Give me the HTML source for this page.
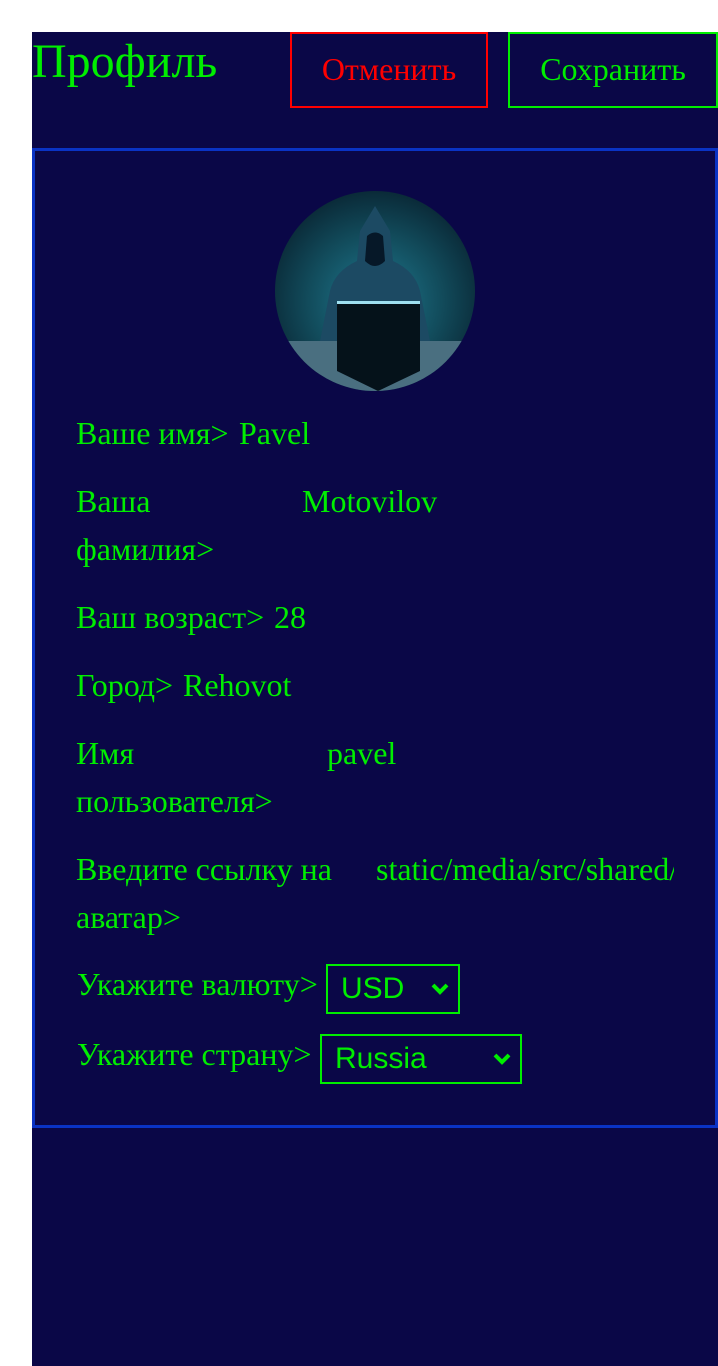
<!DOCTYPE html>
<html><head><meta charset="utf-8"><style>
html,body{margin:0;padding:0;width:718px;height:1366px;background:#fff;overflow:hidden}
.bg{position:absolute;left:32px;top:32px;width:686px;height:1334px;background:#0a0747}
*{font-family:"Liberation Serif",serif;}
.t{position:absolute;color:#00ee00;font-size:32px;line-height:48px;white-space:nowrap}
h1{position:absolute;left:32px;top:34px;margin:0;font-weight:normal;font-size:48px;line-height:56px;color:#00ee00}
.btn{position:absolute;top:32px;box-sizing:border-box;border:2px solid;font-size:32px;text-align:center}
.panel{position:absolute;left:32px;top:148px;width:686px;height:980px;box-sizing:border-box;border:3px solid #0a33c4}
.sel{position:absolute;box-sizing:border-box;border:2px solid #00ee00;height:50px;color:#00ee00;font-family:"Liberation Sans",sans-serif;font-size:30px;line-height:46px;padding-left:13px}
.sel svg{position:absolute;right:8px;top:16px}
</style></head><body>
<div class="bg"></div>
<h1>Профиль</h1>
<div class="btn" style="left:290px;width:198px;border-color:#f00;color:#f00;height:76px;line-height:70px">Отменить</div>
<div class="btn" style="left:508px;width:210px;border-color:#00ee00;color:#00ee00;height:76px;line-height:70px">Сохранить</div>
<div class="panel"></div>
<svg style="position:absolute;left:275px;top:191px" width="200" height="200" viewBox="0 0 200 200">
<defs><radialGradient id="g" cx="50%" cy="55%" r="55%"><stop offset="0" stop-color="#1f7b92"/><stop offset="0.6" stop-color="#124c5c"/><stop offset="1" stop-color="#0a2a38"/></radialGradient>
<clipPath id="c"><circle cx="100" cy="100" r="100"/></clipPath></defs>
<g clip-path="url(#c)">
<rect width="200" height="200" fill="url(#g)"/>
<path d="M100 15 L85 40 L82 70 Q60 80 55 100 L45 150 L155 150 L145 100 Q140 80 118 70 L115 40 Z" fill="#1c4a63"/>
<path d="M92 45 Q100 38 108 45 L110 70 Q100 80 90 70 Z" fill="#061828"/>
<rect x="0" y="150" width="200" height="50" fill="#4a6f80"/>
<path d="M62 112 L145 112 L145 180 L103 200 L62 180 Z" fill="#05121a"/>
<rect x="62" y="110" width="83" height="3" fill="#9fe0f0"/>
</g></svg>
<div class="t" style="left:76px;top:409px">Ваше имя&gt;</div><div class="t" style="left:239px;top:409px">Pavel</div>
<div class="t" style="left:76px;top:477px">Ваша<br>фамилия&gt;</div><div class="t" style="left:302px;top:477px">Motovilov</div>
<div class="t" style="left:76px;top:593px">Ваш возраст&gt;</div><div class="t" style="left:274px;top:593px">28</div>
<div class="t" style="left:76px;top:661px">Город&gt;</div><div class="t" style="left:183px;top:661px">Rehovot</div>
<div class="t" style="left:76px;top:729px">Имя<br>пользователя&gt;</div><div class="t" style="left:327px;top:729px">pavel</div>
<div class="t" style="left:76px;top:845px">Введите ссылку на<br>аватар&gt;</div><div class="t" style="left:376px;top:845px;width:298px;overflow:hidden">static/media/src/shared/</div>
<div class="t" style="left:77px;top:960px">Укажите валюту&gt;</div>
<div class="sel" style="left:326px;top:964px;width:134px">USD<svg width="20" height="14" viewBox="0 0 20 14"><path d="M3 3 L10 10 L17 3" stroke="#00ee00" stroke-width="4" fill="none"/></svg></div>
<div class="t" style="left:77px;top:1030px">Укажите страну&gt;</div>
<div class="sel" style="left:320px;top:1034px;width:202px">Russia<svg width="20" height="14" viewBox="0 0 20 14"><path d="M3 3 L10 10 L17 3" stroke="#00ee00" stroke-width="4" fill="none"/></svg></div>
</body></html>
